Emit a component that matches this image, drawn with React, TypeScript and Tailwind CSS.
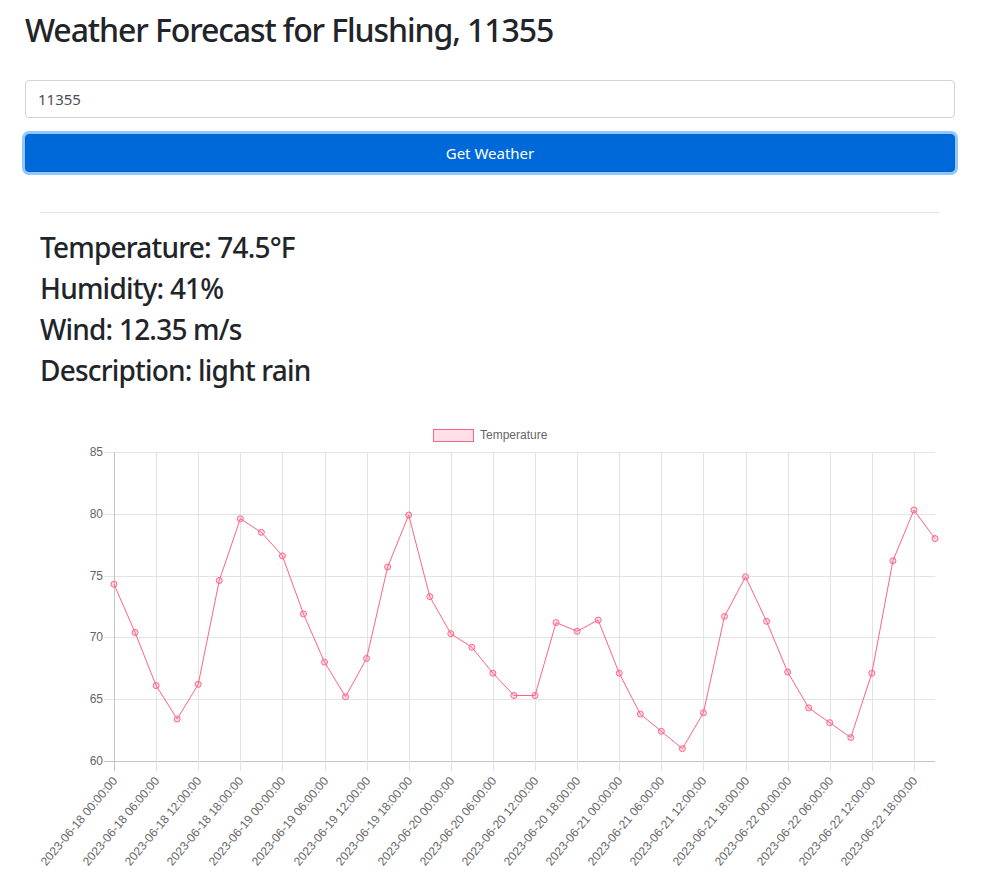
import React from 'react';

// 3-hourly temperatures, 2023-06-18 00:00 → 2023-06-22 21:00
const temps = [
  74.3, 70.4, 66.1, 63.4, 66.2, 74.6, 79.6, 78.5, 76.6, 71.9,
  68.0, 65.2, 68.3, 75.7, 79.9, 73.3, 70.3, 69.2, 67.1, 65.3,
  65.3, 71.2, 70.5, 71.4, 67.1, 63.8, 62.4, 61.0, 63.9, 71.7,
  74.9, 71.3, 67.2, 64.3, 63.1, 61.9, 67.1, 76.2, 80.3, 78.0,
];

const labels = Array.from({ length: 20 }, (_, i) => {
  const day = 18 + Math.floor(i / 4);
  const hour = String((i % 4) * 6).padStart(2, '0');
  return { idx: i * 2, text: `2023-06-${day} ${hour}:00:00` };
});

// plot area inside the svg
const LEFT = 74;
const RIGHT = 895;
const TOP = 33;
const BOTTOM = 342;
const xAt = (i: number) => LEFT + ((RIGHT - LEFT) * i) / (temps.length - 1);
const yAt = (v: number) => BOTTOM - ((v - 60) / 25) * (BOTTOM - TOP);

const PINK = 'rgb(255,99,132)';
const PINK_FILL = 'rgba(255,99,132,0.2)';

function TempChart() {
  const yTicks = [85, 80, 75, 70, 65, 60];
  const points = temps.map((v, i) => `${xAt(i)},${yAt(v)}`).join(' ');

  return (
    <svg
      width={900}
      height={470}
      className="block overflow-visible"
      style={{ fontFamily: '"Liberation Sans", Arial, sans-serif' }}
    >
      {/* legend */}
      <rect x={393.5} y={10.5} width={40} height={12} fill={PINK_FILL} stroke={PINK} />
      <text x={440} y={16.5} fontSize={12} fill="#666" dominantBaseline="middle">
        Temperature
      </text>

      {/* horizontal grid + y labels */}
      {yTicks.map((t) => {
        const y = Math.round(yAt(t)) + 0.5;
        return (
          <g key={t}>
            <line x1={LEFT - 10} x2={RIGHT} y1={y} y2={y} stroke={t === 60 ? '#c4c4c4' : '#e3e3e3'} />
            <text x={LEFT - 11} y={y} fontSize={12} fill="#666" textAnchor="end" dominantBaseline="middle">
              {t}
            </text>
          </g>
        );
      })}

      {/* vertical grid + x labels */}
      {labels.map((l) => {
        const x = Math.round(xAt(l.idx)) + 0.5;
        const ax = x + 1;
        const ay = BOTTOM + 18;
        return (
          <g key={l.idx}>
            <line x1={x} x2={x} y1={TOP} y2={BOTTOM + 10} stroke={l.idx === 0 ? '#c4c4c4' : '#e3e3e3'} />
            <text
              x={ax}
              y={ay}
              fontSize={12}
              fill="#666"
              textAnchor="end"
              dominantBaseline="middle"
              transform={`rotate(-50 ${ax} ${ay})`}
            >
              {l.text}
            </text>
          </g>
        );
      })}

      {/* data */}
      <polyline points={points} fill="none" stroke={PINK} strokeWidth={1} />
      {temps.map((v, i) => (
        <circle key={i} cx={xAt(i)} cy={yAt(v)} r={3} fill={PINK_FILL} stroke={PINK} strokeWidth={1} />
      ))}
    </svg>
  );
}

export default function App() {
  return (
    <div className="min-h-screen bg-white pl-[25px] pr-[30px] pt-[11px] text-[#212529] font-['Noto_Sans',sans-serif]">
      <h2 className="text-[32px] leading-[38px] font-medium tracking-[-1.1px]">Weather Forecast for Flushing, 11355</h2>

      <div className="mt-[31px]">
        <input
          defaultValue="11355"
          className="block h-[38px] w-full rounded-[4px] border border-[#ced4da] px-[12px] text-[15px] text-[#495057] outline-none"
        />
        <button className="mt-[16px] block h-[38px] w-full rounded-[4px] border border-[#0062cc] bg-[#0069d9] text-[15px] text-white shadow-[0_0_0_3px_rgba(38,143,255,0.5)]">
          Get Weather
        </button>
      </div>

      <div className="px-[15px]">
        <hr className="mt-[40px] mb-[18px] border-t border-[#e5e5e5]" />
        <div className="flex flex-col">
          <h3 className="mb-[8px] text-[28px] leading-[33px] font-medium tracking-[-0.8px]">Temperature: 74.5°F</h3>
          <h3 className="mb-[8px] text-[28px] leading-[33px] font-medium tracking-[-0.8px]">Humidity: 41%</h3>
          <h3 className="mb-[8px] text-[28px] leading-[33px] font-medium tracking-[-0.8px]">Wind: 12.35 m/s</h3>
          <h3 className="mb-[8px] text-[28px] leading-[33px] font-medium tracking-[-0.8px]">Description: light rain</h3>
        </div>
        <div className="mt-[24px]">
          <TempChart />
        </div>
      </div>
    </div>
  );
}
